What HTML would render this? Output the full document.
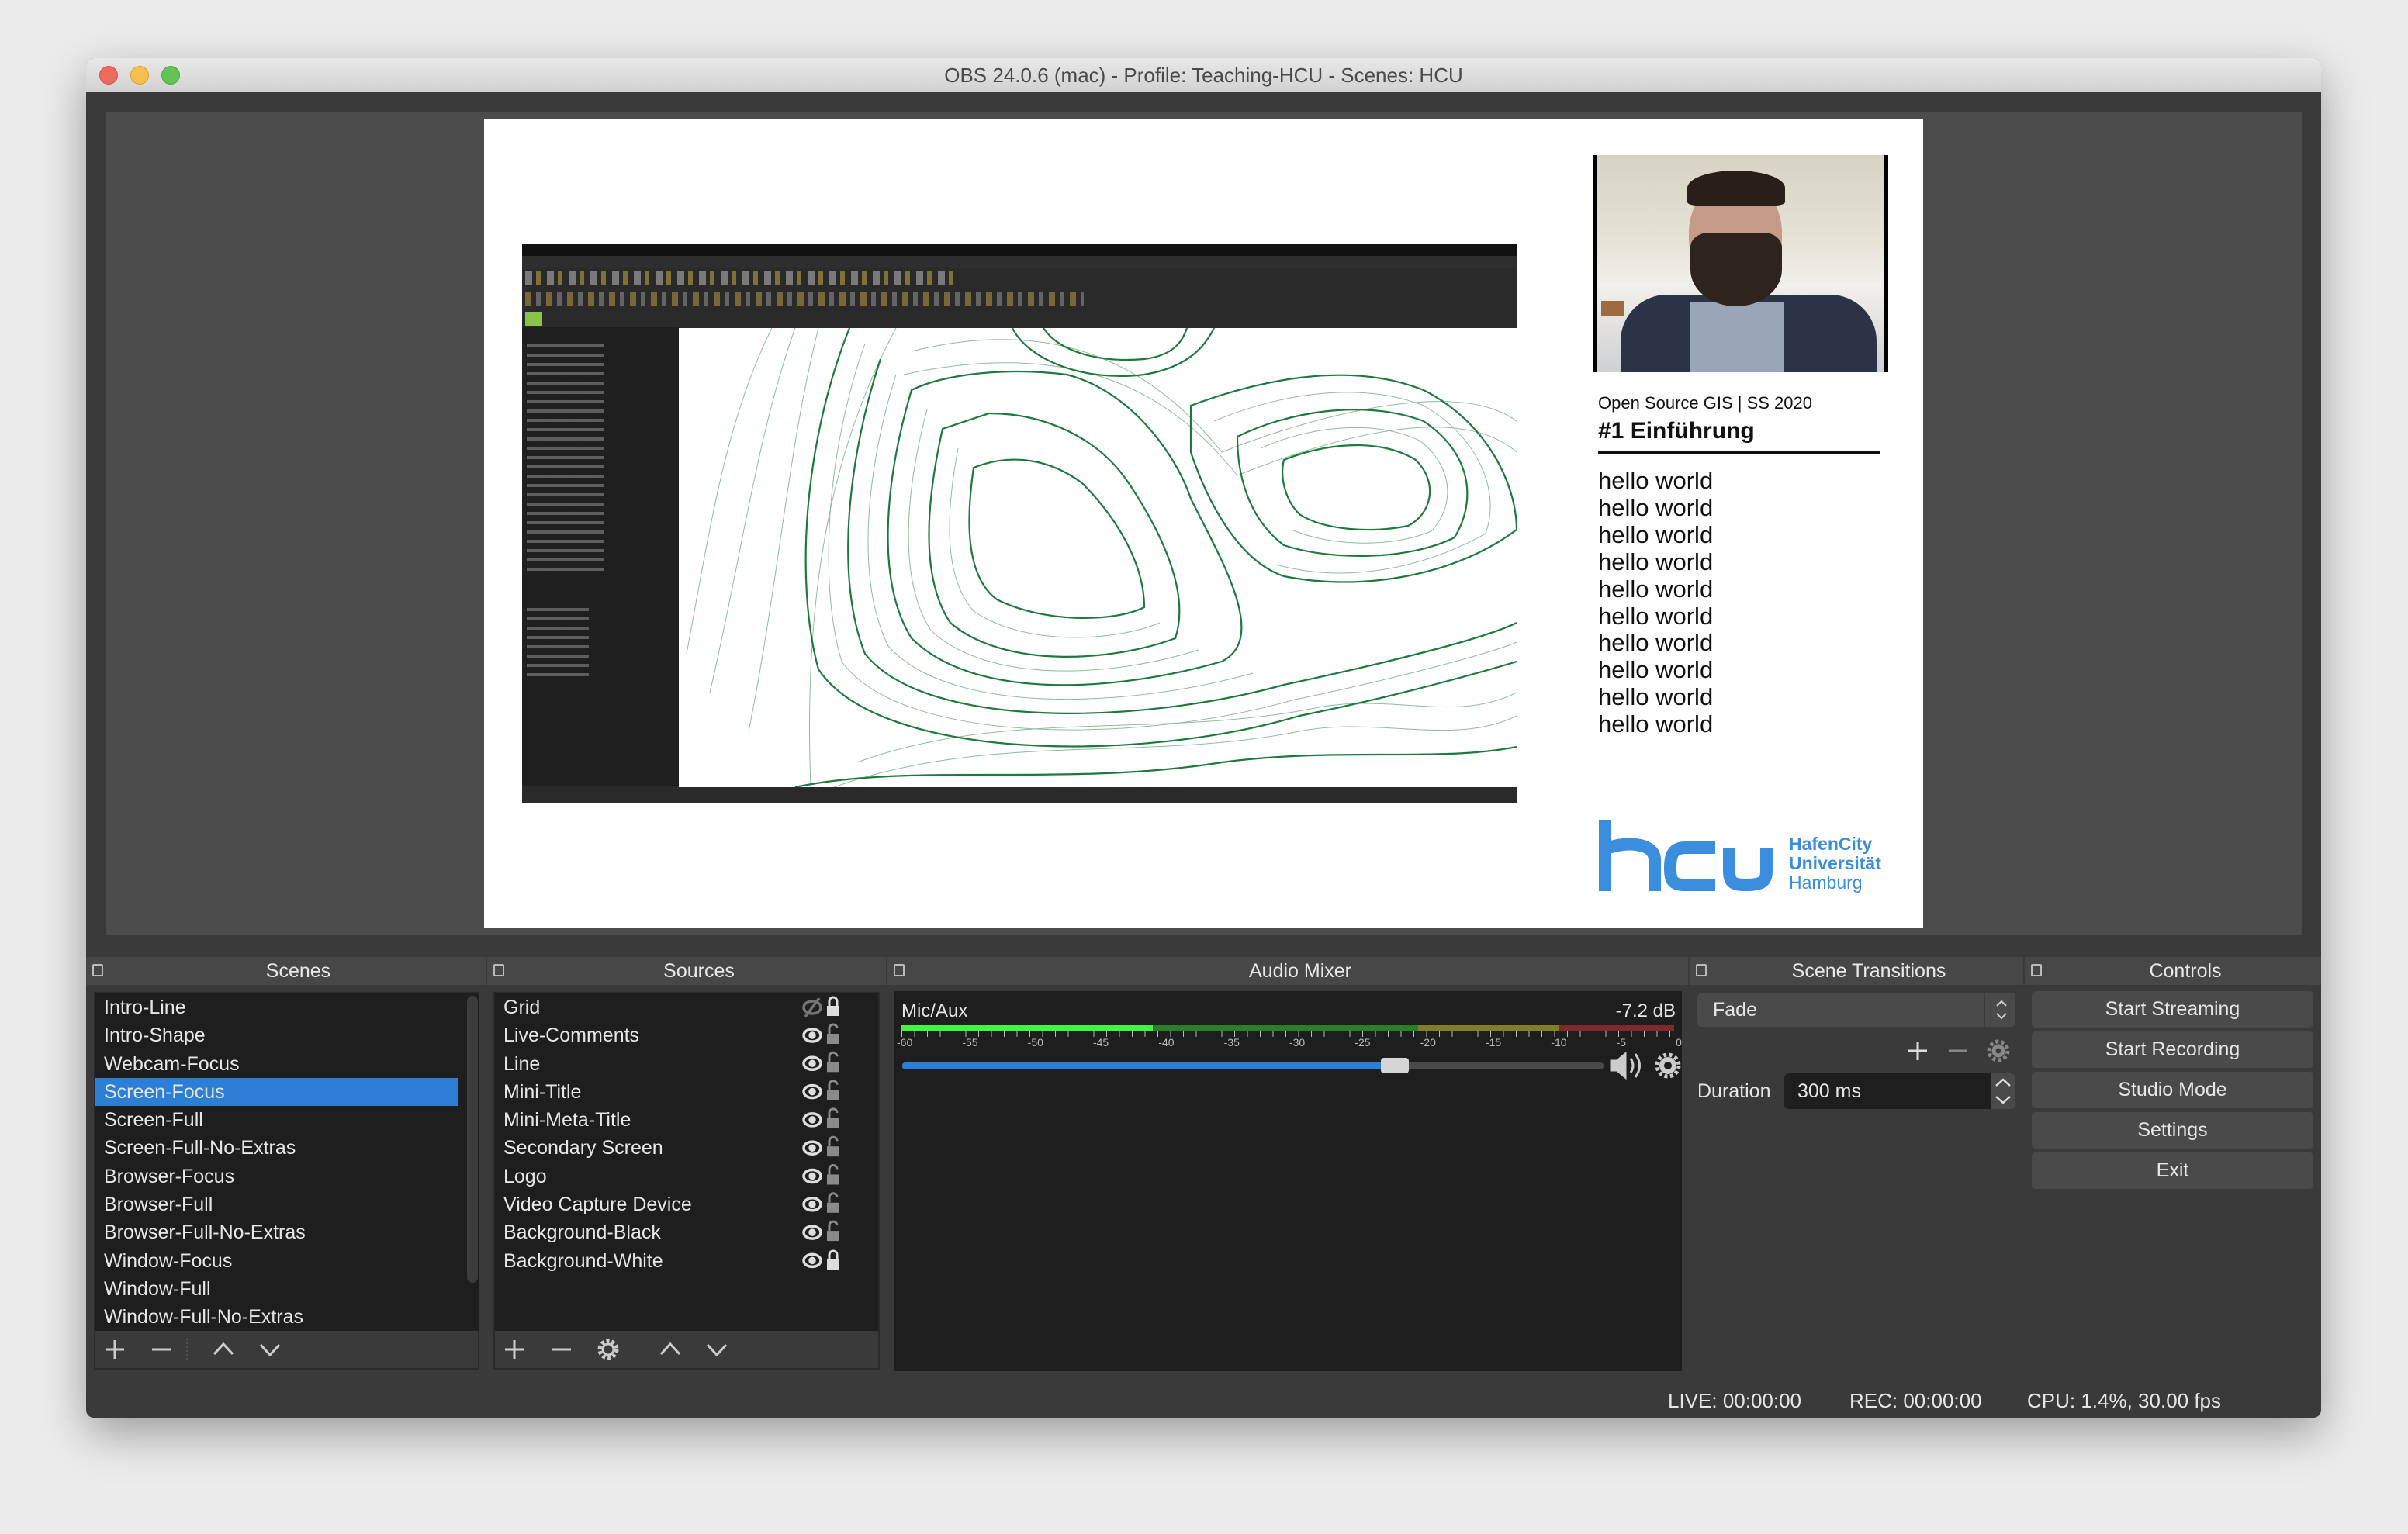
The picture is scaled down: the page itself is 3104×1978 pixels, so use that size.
<!DOCTYPE html>
<html><head><meta charset="utf-8"><style>
*{margin:0;padding:0;box-sizing:border-box}
body{width:3104px;height:1978px;background:#ececec;position:relative;overflow:hidden;font-family:"Liberation Sans",sans-serif;color:#e6e6e6}
.a{position:absolute}
.win{left:111px;top:75px;width:2881px;height:1753px;background:#3a3a3a;border-radius:10px;overflow:hidden;box-shadow:0 20px 60px rgba(0,0,0,.35)}
.tb{left:0;top:0;width:100%;height:44px;background:linear-gradient(#e8e8e8,#d2d2d2);border-bottom:1px solid #b5b5b5;color:#4a4a4a;font-size:26px;text-align:center;line-height:44px}
.dot{width:24px;height:24px;border-radius:50%;top:10px}
.hdr{top:1159px;height:36px;background:#474747;font-size:25px;text-align:center;line-height:36px;color:#e8e8e8;padding-left:32px}
.hdr i{position:absolute;left:8px;top:9px;width:14px;height:16px;border:2px solid #bbb;border-radius:2px}
.list{background:#1e1e1e}
.row{height:36.3px;line-height:36px;font-size:25px;padding-left:11px;white-space:nowrap}
.sel{background:#2d7fd6}
.btn{left:2508px;width:363px;height:47px;background:#4a4a4a;border-radius:5px;font-size:25px;text-align:center;line-height:47px}
.hw{font-size:31px;line-height:34.9px;color:#111}
</style></head><body>
<div class="a win">
 <div class="a tb">OBS 24.0.6 (mac) - Profile: Teaching-HCU - Scenes: HCU
  <div class="a dot" style="left:17px;background:#ee6a5f;border:1px solid #d4534a"></div>
  <div class="a dot" style="left:57px;background:#f6bf4f;border:1px solid #d9a13a"></div>
  <div class="a dot" style="left:97px;background:#61c454;border:1px solid #4ba73f"></div>
 </div>
 <div class="a" style="left:25px;top:69px;width:2831px;height:1061px;background:#4c4c4c"></div>
 <div class="a" style="left:513px;top:79px;width:1855px;height:1042px;background:#fff">
  <div class="a" style="left:49px;top:160px;width:1282px;height:721px;background:#2a2a2a;overflow:hidden">
   <div class="a" style="left:0;top:0;width:100%;height:16px;background:#111"></div>
   <div class="a" style="left:0;top:16px;width:100%;height:16px;background:#2e2e2e;border-bottom:1px solid #222"></div>
   <div class="a" style="left:4px;top:36px;width:560px;height:18px;background:repeating-linear-gradient(90deg,#ddd 0 9px,transparent 9px 14px,#e8c84a 14px 20px,transparent 20px 28px);opacity:.45"></div>
   <div class="a" style="left:4px;top:62px;width:720px;height:18px;background:repeating-linear-gradient(90deg,#e8c84a 0 8px,transparent 8px 14px,#bbb 14px 20px,transparent 20px 27px);opacity:.4"></div>
   <div class="a" style="left:4px;top:88px;width:22px;height:18px;background:#8bc34a"></div>
   <div class="a" style="left:0;top:108px;width:202px;height:591px;background:#1f1f1f"></div>
   <div class="a" style="left:6px;top:130px;width:100px;height:300px;background:repeating-linear-gradient(180deg,#bbb 0 4px,transparent 4px 12px);opacity:.4"></div>
   <div class="a" style="left:6px;top:470px;width:80px;height:90px;background:repeating-linear-gradient(180deg,#bbb 0 4px,transparent 4px 12px);opacity:.4"></div>
   <div class="a" style="left:202px;top:109px;width:1080px;height:592px;background:#fff">
    <svg width="1080" height="592" viewBox="0 0 1080 592" fill="none" stroke="#1e7a3c">
     <g stroke-width="1" opacity=".5">
      <path d="M120 0 C60 120 40 260 10 420 M150 0 C100 140 80 300 40 470 M180 0 C140 160 130 320 90 520 M280 0 C200 150 160 330 170 592"/>
      <path d="M300 30 C500 -20 620 60 700 160 C800 120 1000 60 1080 120 M290 60 C520 10 640 90 720 190 C820 150 1000 90 1080 160"/>
      <path d="M200 592 C400 520 600 560 800 520 C900 500 1000 540 1080 500 M230 560 C420 490 620 530 820 490 C920 470 1000 510 1080 470"/>
      <path d="M240 20 C190 160 180 330 210 430 C290 540 600 535 790 480 C935 450 1060 415 1080 405"/>
      <path d="M280 60 C245 170 225 320 270 410 C350 500 580 490 740 445"/>
      <path d="M320 105 C295 200 280 320 325 390 C400 460 560 450 670 415"/>
      <path d="M690 120 C760 90 870 65 960 100 C1030 140 1060 210 1040 265 C960 310 860 330 770 305"/>
      <path d="M750 155 C805 130 890 115 955 145 C1000 180 1000 230 970 262 C915 285 835 280 790 260"/>
      <path d="M360 155 C345 235 340 320 380 365 C445 410 560 405 620 380"/>
     </g>
     <g stroke-width="2.2">
      <path d="M220 0 C160 150 150 330 180 440 C260 560 600 560 800 500 C950 470 1080 430 1080 430"/>
      <path d="M260 40 C220 160 200 320 240 420 C320 520 600 510 780 460 C920 430 1040 400 1080 380"/>
      <path d="M300 80 C270 180 250 320 300 400 C380 480 560 470 700 430 C760 400 700 300 660 220 C640 160 580 80 500 60 C420 50 340 60 300 80Z"/>
      <path d="M340 130 C320 220 310 320 350 380 C420 440 560 430 640 400 C660 340 620 260 580 200 C540 140 470 110 400 110 Z"/>
      <path d="M380 180 C370 250 370 320 410 350 C470 380 560 380 600 360 C600 300 560 240 520 200 C480 170 430 160 380 180Z"/>
      <path d="M660 100 C740 70 860 40 960 80 C1040 120 1080 200 1080 260 C1000 320 880 340 780 320 C720 300 680 220 660 160Z"/>
      <path d="M720 140 C780 110 880 90 960 120 C1020 160 1030 220 1000 270 C940 300 840 300 780 280 C740 250 720 200 720 140Z"/>
      <path d="M780 170 C830 150 900 140 950 170 C980 200 970 240 940 255 C890 265 830 260 800 240 C780 220 775 190 780 170Z"/>
      <path d="M430 0 C450 40 520 70 600 60 C660 50 680 20 690 0 M470 0 C490 30 540 45 600 40 C640 35 650 15 655 0"/>
      <path d="M150 592 C300 560 500 592 700 560 C850 540 980 560 1080 540"/>
     </g>
    </svg>
   </div>
   <div class="a" style="left:0;top:701px;width:100%;height:20px;background:#2a2a2a"></div>
  </div>
  <div class="a" style="left:1429px;top:46px;width:381px;height:280px;background:linear-gradient(#d6d2c4 0,#e6e2d6 40%,#f2f0ec 60%,#cfd0d2 100%);border-left:6px solid #000;border-right:6px solid #000;overflow:hidden">
   <div class="a" style="left:5px;top:188px;width:30px;height:20px;background:#a06a40"></div>
   <div class="a" style="left:30px;top:180px;width:330px;height:100px;background:#2c3346;border-radius:60px 60px 0 0"></div>
   <div class="a" style="left:120px;top:190px;width:120px;height:90px;background:#9aa6b8"></div>
   <div class="a" style="left:118px;top:30px;width:120px;height:140px;background:#c59b86;border-radius:50% 50% 45% 45%"></div>
   <div class="a" style="left:116px;top:20px;width:126px;height:45px;background:#2a1e18;border-radius:50% 50% 10% 10%"></div>
   <div class="a" style="left:120px;top:100px;width:118px;height:95px;background:#2e231d;border-radius:20% 20% 50% 50%"></div>
  </div>
  <div class="a" style="left:1436px;top:353px;font-size:22px;color:#111;white-space:nowrap">Open Source GIS | SS 2020</div>
  <div class="a" style="left:1436px;top:385px;font-size:30px;font-weight:bold;color:#111;white-space:nowrap">#1 Einführung</div>
  <div class="a" style="left:1436px;top:428px;width:364px;height:3px;background:#111"></div>
  <div class="a" style="left:1436px;top:449px">
   <div class="hw">hello world</div><div class="hw">hello world</div><div class="hw">hello world</div><div class="hw">hello world</div><div class="hw">hello world</div><div class="hw">hello world</div><div class="hw">hello world</div><div class="hw">hello world</div><div class="hw">hello world</div><div class="hw">hello world</div>
  </div>
  <svg class="a" style="left:1437px;top:903px" width="230" height="92" viewBox="0 0 230 92">
   <g fill="none" stroke="#3b8ddd" stroke-width="16">
    <path d="M8 0 V92 M8 38 C30 28 70 28 72 50 V92"/>
    <path d="M150 36 H112 C95 36 92 46 92 62 C92 80 96 84 112 84 H150"/>
    <path d="M168 36 V66 C168 82 174 84 190 84 C210 84 216 80 216 66 V36"/>
   </g>
  </svg>
  <div class="a" style="left:1682px;top:922px;font-size:23px;line-height:25px;color:#3b8ddd;font-weight:bold">HafenCity<br>Universität<br><span style="font-weight:normal">Hamburg</span></div>
 </div>
 <div class="a hdr" style="left:0;width:515px"><i></i>Scenes</div>
 <div class="a hdr" style="left:517px;width:514px"><i></i>Sources</div>
 <div class="a hdr" style="left:1033px;width:1032px"><i></i>Audio Mixer</div>
 <div class="a hdr" style="left:2067px;width:430px"><i></i>Scene Transitions</div>
 <div class="a hdr" style="left:2499px;width:382px"><i></i>Controls</div>
 <div class="a" style="left:10px;top:1204px;width:497px;height:487px;border:2px solid #2a2a2a;background:#3a3a3a"></div>
 <div class="a list" style="left:12px;top:1206px;width:495px;height:435px">
  <div style="width:467px">
  <div class="row">Intro-Line</div><div class="row">Intro-Shape</div><div class="row">Webcam-Focus</div><div class="row sel">Screen-Focus</div><div class="row">Screen-Full</div><div class="row">Screen-Full-No-Extras</div><div class="row">Browser-Focus</div><div class="row">Browser-Full</div><div class="row">Browser-Full-No-Extras</div><div class="row">Window-Focus</div><div class="row">Window-Full</div><div class="row">Window-Full-No-Extras</div>
  </div>
  <div class="a" style="left:479px;top:3px;width:14px;height:370px;background:#3c3c3c;border-radius:7px"></div>
 </div>
 <svg class="a" style="left:20px;top:1645px" width="260" height="40" viewBox="0 0 260 40" stroke="#ccc" stroke-width="3" fill="none">
  <path d="M17 8 V32 M5 20 H29"/><path d="M65 20 H89"/><path d="M145 26 L157 13 L169 26"/><path d="M205 14 L217 27 L229 14"/>
  <path d="M110 6 V36" stroke="#666" stroke-dasharray="2 3" stroke-width="1"/>
 </svg>
 <div class="a" style="left:525px;top:1204px;width:498px;height:487px;border:2px solid #2a2a2a;background:#3a3a3a"></div>
 <div class="a list" style="left:527px;top:1206px;width:494px;height:435px">
  <div class="row">Grid</div><div class="row">Live-Comments</div><div class="row">Line</div><div class="row">Mini-Title</div><div class="row">Mini-Meta-Title</div><div class="row">Secondary Screen</div><div class="row">Logo</div><div class="row">Video Capture Device</div><div class="row">Background-Black</div><div class="row">Background-White</div>
  <svg class="a" style="left:396px;top:0" width="56" height="363" viewBox="0 0 56 363">
   <g fill="none" stroke="#ddd" stroke-width="3.5">
    <g opacity=".45"><ellipse cx="13" cy="18" rx="11" ry="8"/><path d="M4 30 L22 6"/></g>
    <g id="e"><ellipse cx="13" cy="54" rx="11" ry="8"/><circle cx="13" cy="54" r="3" fill="#ddd"/></g>
    <use href="#e" y="36.3"/><use href="#e" y="72.6"/><use href="#e" y="108.9"/><use href="#e" y="145.2"/><use href="#e" y="181.5"/><use href="#e" y="217.8"/><use href="#e" y="254.1"/><use href="#e" y="290.4"/>
   </g>
   <g fill="#ddd"><rect x="32" y="16" width="16" height="13"/><path d="M35 16 V10 a5 5 0 0 1 10 0 V16" stroke="#ddd" stroke-width="3" fill="none"/>
    <rect x="32" y="343" width="16" height="13"/><path d="M35 343 V337 a5 5 0 0 1 10 0 V343" stroke="#ddd" stroke-width="3" fill="none"/></g>
   <g fill="#8a8a8a" id="l"><rect x="32" y="52" width="16" height="13"/><path d="M35 52 V45 a5 5 0 0 1 10 0" stroke="#8a8a8a" stroke-width="3" fill="none"/></g>
   <use href="#l" y="36.3"/><use href="#l" y="72.6"/><use href="#l" y="108.9"/><use href="#l" y="145.2"/><use href="#l" y="181.5"/><use href="#l" y="217.8"/><use href="#l" y="254.1"/>
  </svg>
 </div>
 <svg class="a" style="left:535px;top:1645px" width="320" height="40" viewBox="0 0 320 40" stroke="#ccc" stroke-width="3" fill="none">
  <path d="M17 8 V32 M5 20 H29"/><path d="M66 20 H90"/>
  <circle cx="138" cy="20" r="7"/><circle cx="138" cy="20" r="11" stroke-dasharray="4 3" stroke-width="5"/>
  <path d="M206 26 L218 13 L230 26"/><path d="M266 14 L278 27 L290 14"/>
 </svg>
 <div class="a list" style="left:1041px;top:1203px;width:1016px;height:490px">
  <div class="a" style="left:10px;top:12px;font-size:24px">Mic/Aux</div>
  <div class="a" style="right:8px;top:12px;font-size:24px">-7.2 dB</div>
  <div class="a" style="left:10px;top:44px;width:996px;height:7px;background:linear-gradient(90deg,#44f244 0 324px,#2b7f2b 324px 666px,#7f7f2a 666px 848px,#7f2a2a 848px)"></div>
  <div class="a" style="left:10px;top:52px;width:996px;height:7px;background:repeating-linear-gradient(90deg,#bbb 0 1px,transparent 1px 16.5px)"></div>
  <div class="a" style="left:4px;top:58px;width:1012px;font-size:14px;color:#bbb;display:flex;justify-content:space-between"><span>-60</span><span>-55</span><span>-50</span><span>-45</span><span>-40</span><span>-35</span><span>-30</span><span>-25</span><span>-20</span><span>-15</span><span>-10</span><span>-5</span><span>0</span></div>
  <div class="a" style="left:11px;top:92px;width:904px;height:9px;background:#4a4a4a;border-radius:4px"></div>
  <div class="a" style="left:11px;top:92px;width:630px;height:9px;background:#2d7fd6;border-radius:4px"></div>
  <div class="a" style="left:628px;top:86px;width:36px;height:20px;background:#d6d6d6;border-radius:4px"></div>
  <svg class="a" style="left:922px;top:76px" width="100" height="40" viewBox="0 0 100 40" fill="#ccc" stroke="#ccc">
   <path d="M2 13 H10 L22 3 V37 L10 27 H2Z"/><path d="M28 11 q6 9 0 18 M34 5 q11 15 0 30" fill="none" stroke-width="3"/>
   <circle cx="76" cy="20" r="8" fill="none" stroke-width="6"/><circle cx="76" cy="20" r="14" fill="none" stroke-width="5" stroke-dasharray="4 3.5"/>
  </svg>
 </div>
 <div class="a" style="left:2077px;top:1205px;width:410px;height:44px;background:#4a4a4a;border-radius:6px;font-size:25px;line-height:44px;padding-left:20px">Fade<div class="a" style="left:369px;top:0;width:2px;height:44px;background:#3a3a3a"></div><svg class="a" style="left:374px;top:0" width="36" height="44" viewBox="0 0 36 44" stroke="#ccc" stroke-width="2" fill="none"><path d="M12 17 L18 11 L24 17 M12 27 L18 33 L24 27"/></svg></div>
 <svg class="a" style="left:2340px;top:1262px" width="150" height="36" viewBox="0 0 150 36" stroke-width="3" fill="none">
  <path d="M21 6 V30 M9 18 H33" stroke="#ddd"/><path d="M61 18 H85" stroke="#888"/>
  <circle cx="125" cy="18" r="6" stroke="#888" stroke-width="5"/><circle cx="125" cy="18" r="12" stroke="#888" stroke-width="5" stroke-dasharray="4 3.5"/>
 </svg>
 <div class="a" style="left:2077px;top:1318px;font-size:25px">Duration</div>
 <div class="a" style="left:2189px;top:1309px;width:298px;height:46px;background:#1e1e1e;border-radius:6px;font-size:25px;line-height:46px;padding-left:17px">300 ms<div class="a" style="left:266px;top:0;width:32px;height:46px;background:#4a4a4a;border-radius:0 6px 6px 0"><svg width="32" height="46" viewBox="0 0 32 46" stroke="#ddd" stroke-width="2.5" fill="none"><path d="M7 16 L16 8 L25 16 M7 30 L16 38 L25 30"/></svg></div></div>
 <div class="a btn" style="top:1203px">Start Streaming</div>
 <div class="a btn" style="top:1255px">Start Recording</div>
 <div class="a btn" style="top:1307px">Studio Mode</div>
 <div class="a btn" style="top:1359px">Settings</div>
 <div class="a btn" style="top:1411px">Exit</div>
 <div class="a" style="left:2039px;top:1716px;font-size:26px;white-space:nowrap">LIVE: 00:00:00</div>
 <div class="a" style="left:2273px;top:1716px;font-size:26px;white-space:nowrap">REC: 00:00:00</div>
 <div class="a" style="left:2502px;top:1716px;font-size:26px;white-space:nowrap">CPU: 1.4%, 30.00 fps</div>
</div>
</body></html>
